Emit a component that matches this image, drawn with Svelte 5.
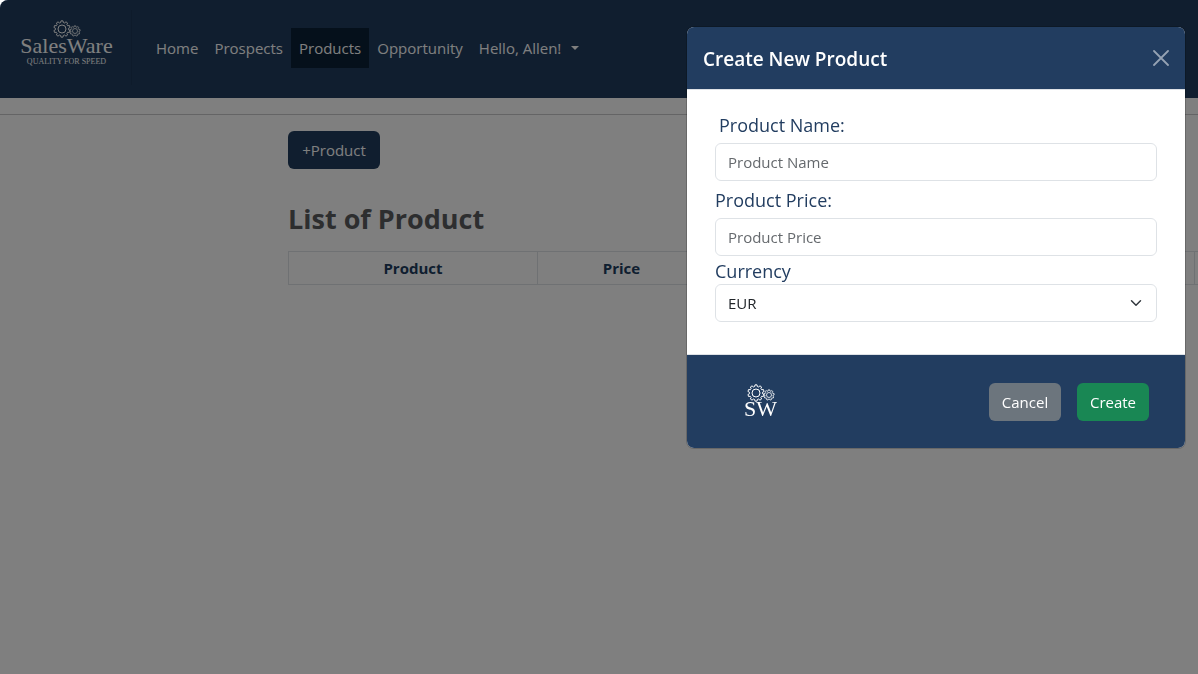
<script>
  const links = ['Home', 'Prospects', 'Products', 'Opportunity'];
  let active = $state('Products');
  let name = $state('');
  let price = $state('');
  let currency = $state('EUR');
  let open = $state(true);

  // Outline of a cog with the given number of rounded teeth
  function cog(cx, cy, outer, inner, teeth) {
    const step = (Math.PI * 2) / teeth;
    const at = (r, a) => `${(cx + r * Math.cos(a)).toFixed(2)} ${(cy + r * Math.sin(a)).toFixed(2)}`;
    let d = '';
    for (let i = 0; i < teeth; i++) {
      const a = i * step - Math.PI / 2;
      d += `${i ? 'L' : 'M'}${at(inner, a - step * 0.32)}L${at(outer, a - step * 0.2)}L${at(outer, a + step * 0.2)}L${at(inner, a + step * 0.32)}`;
    }
    return d + 'Z';
  }
</script>

{#snippet cogs()}
  <path d={cog(9, 9, 8.2, 6.6, 10)} />
  <circle cx="9" cy="9" r="4" />
  <path d={cog(22, 11, 5.2, 4.1, 9)} stroke-width="0.8" />
  <circle cx="22" cy="11" r="2.5" stroke-width="0.8" />
{/snippet}

<div class="page">
  <header class="navbar">
    <a class="brand" href="#home">
      <svg class="cogs" viewBox="0 0 28 18" aria-hidden="true">{@render cogs()}</svg>
      <span class="brand-name">SalesWare</span>
      <span class="tagline">QUALITY FOR SPEED</span>
    </a>
    <nav>
      {#each links as link}
        <a href={'#' + link.toLowerCase()} class:active={active === link} onclick={() => (active = link)}>{link}</a>
      {/each}
      <button class="account" type="button">Hello, Allen!<span class="caret"></span></button>
    </nav>
  </header>
  <hr />
  <main>
    <button class="btn add" type="button" onclick={() => (open = true)}>+Product</button>
    <h1>List of Product</h1>
    <table>
      <colgroup><col class="c-product" /><col class="c-price" /><col class="c-wide" /><col /></colgroup>
      <thead><tr><th>Product</th><th>Price</th><td></td><td></td></tr></thead>
    </table>
  </main>
</div>

{#if open}
  <div class="backdrop">
    <div class="modal" role="dialog" aria-modal="true" aria-labelledby="modal-title">
      <div class="modal-header">
        <h2 id="modal-title">Create New Product</h2>
        <button class="close" type="button" aria-label="Close" onclick={() => (open = false)}>
          <svg viewBox="0 0 16 16" aria-hidden="true"><path d="M1 1L15 15M15 1L1 15" /></svg>
        </button>
      </div>
      <form id="product-form" onsubmit={(e) => e.preventDefault()}>
        <label class="indent" for="name">Product Name:</label>
        <input id="name" type="text" placeholder="Product Name" bind:value={name} />
        <label for="price">Product Price:</label>
        <input id="price" type="text" placeholder="Product Price" bind:value={price} />
        <label class="tight" for="currency">Currency</label>
        <div class="select">
          <select id="currency" bind:value={currency}>
            <option>EUR</option>
          </select>
          <svg viewBox="0 0 16 16" aria-hidden="true"><path d="M2 5l6 6 6-6" /></svg>
        </div>
      </form>
      <div class="modal-footer">
        <div class="mark">
          <svg class="cogs" viewBox="0 0 28 18" aria-hidden="true">{@render cogs()}</svg>
          <span class="brand-name">SW</span>
        </div>
        <button class="btn cancel" type="button" onclick={() => (open = false)}>Cancel</button>
        <button class="btn create" type="submit" form="product-form">Create</button>
      </div>
    </div>
  </div>
{/if}

<style>
  :global(body) {
    background: #fff;
    font: 15px/24px "Open Sans", "Noto Sans", sans-serif;
    color: #212529;
  }
  :global(*) { box-sizing: border-box; }
  button, input, select { font: inherit; }
  .page { min-height: 100vh; overflow: hidden; }
  .navbar {
    display: flex;
    height: 98px;
    padding: 0 20px;
    background: #203d5f;
    border-radius: 8px 0 0 0;
  }
  .brand, .mark {
    display: flex;
    flex-direction: column;
    align-items: center;
    color: #fff;
    text-decoration: none;
    font-family: "Liberation Serif", serif;
  }
  .brand {
    width: 112px;
    height: 75px;
    margin-top: 10px;
    padding: 10px 18px 0 0;
    border-right: 1px solid #1c3656;
  }
  .cogs { width: 28px; height: 18px; fill: none; stroke: #fff; stroke-width: 1; }
  .brand-name { font-size: 22px; line-height: 16px; }
  .tagline { font-size: 8px; line-height: 16px; white-space: nowrap; }
  nav { display: flex; align-items: flex-start; padding: 28px 0 0 16px; }
  nav a, .account {
    padding: 8px;
    color: #fff;
    text-decoration: none;
    white-space: nowrap;
  }
  nav a.active { background: #0a2036; }
  .account { display: flex; align-items: center; gap: 10px; border: 0; background: none; }
  .caret { border: 4px solid transparent; border-top-color: #fff; border-bottom: 0; }
  hr { margin: 16px 0; border: 0; border-top: 1px solid #c8c9ca; }
  main { padding-left: 288px; }
  .btn {
    height: 38px;
    padding: 0 12px;
    border: 0;
    border-radius: 6px;
    color: #fff;
  }
  .add { display: block; width: 92px; background: #203d5f; }
  h1 { margin: 32px 0 14px; font-size: 27px; line-height: 36px; font-weight: 700; color: #5a5c5f; }
  table { width: 1032px; table-layout: fixed; border-collapse: collapse; color: #203d5f; }
  .c-product { width: 249px; }
  .c-price { width: 168px; }
  .c-wide { width: 489px; }
  th, td { height: 33px; padding: 4px; border: 1px solid #dee2e6; text-align: center; }
  .backdrop {
    position: fixed;
    inset: 0;
    display: flex;
    justify-content: flex-end;
    align-items: flex-start;
    padding: 26px 12px;
    background: rgba(0, 0, 0, 0.5);
    border-radius: 8px 0 0 0;
  }
  .modal {
    width: 500px;
    max-width: 100%;
    overflow: hidden;
    border: 1px solid rgba(0, 0, 0, 0.18);
    border-radius: 8px;
    background: #fff;
    background-clip: padding-box;
  }
  .modal-header {
    display: flex;
    align-items: center;
    justify-content: space-between;
    height: 63px;
    padding: 0 16px;
    border-bottom: 1px solid #dee2e6;
    background: #223d60;
    color: #fff;
  }
  h2 { margin: 0; padding-top: 2px; font-size: 19px; line-height: 30px; font-weight: 600; }
  .close { display: flex; padding: 0; border: 0; background: none; }
  .close svg { width: 16px; height: 16px; fill: none; stroke: #95a2b3; stroke-width: 1.8; stroke-linecap: round; }
  form { display: flex; flex-direction: column; padding: 16px 28px 32px; }
  label { padding-top: 2px; font-size: 18px; line-height: 35px; color: #223d60; }
  .indent { padding-left: 4px; }
  .tight { line-height: 26px; }
  input, select {
    width: 100%;
    height: 38px;
    padding: 0 12px;
    border: 1px solid #dee2e6;
    border-radius: 6px;
    background: #fff;
    color: #212529;
  }
  input::placeholder { color: #65696d; opacity: 1; }
  .select { display: grid; align-items: center; }
  .select > :global(*) { grid-area: 1 / 1; }
  select { appearance: none; }
  .select svg {
    justify-self: end;
    width: 12px;
    height: 12px;
    margin-right: 15px;
    fill: none;
    stroke: #343a40;
    stroke-width: 2;
    stroke-linecap: round;
    stroke-linejoin: round;
    pointer-events: none;
  }
  .modal-footer {
    display: flex;
    align-items: center;
    gap: 16px;
    height: 94px;
    padding: 0 36px 0 57px;
    border-top: 1px solid #dee2e6;
    background: #223d60;
  }
  .mark { margin-right: auto; padding-bottom: 4px; }
  .mark .brand-name { line-height: 14px; }
  .cancel { width: 72px; background: #6c757d; }
  .create { width: 72px; background: #198754; }
</style>
